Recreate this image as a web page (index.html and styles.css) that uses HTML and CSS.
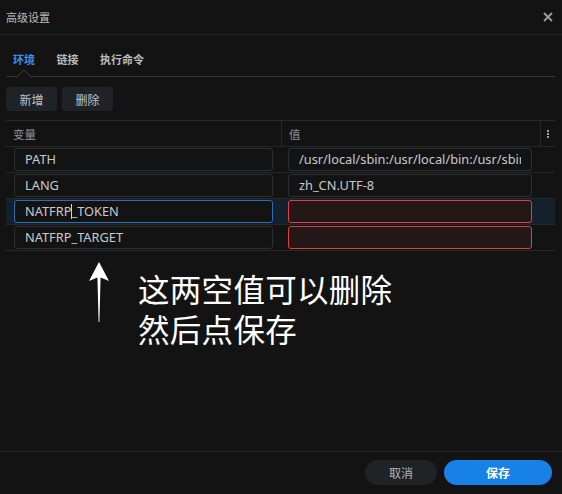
FILE: index.html
```html
<!DOCTYPE html>
<html lang="zh">
<head>
<meta charset="utf-8">
<link rel="stylesheet" href="styles.css">
</head>
<body>
<div class="dialog">
  <div class="titlebar">
    <span class="title">高级设置</span>
    <svg class="close" width="10" height="10" viewBox="0 0 10 10"><path d="M1 1L9 9M9 1L1 9" stroke="#9a9ea2" stroke-width="1.8"/></svg>
  </div>
  <div class="content">
    <div class="tabs">
      <span class="tab active">环境</span>
      <span class="tab">链接</span>
      <span class="tab">执行命令</span>
      <svg class="caret" width="14" height="7" viewBox="0 0 14 7"><path d="M0 7L7 0L14 7" fill="#131313" stroke="#3a3d40" stroke-width="1"/></svg>
    </div>
    <div class="toolbar">
      <button class="btn">新增</button>
      <button class="btn">删除</button>
    </div>
    <div class="table">
      <div class="row head">
        <div class="cell c1">变量</div>
        <div class="cell c2">值</div>
        <div class="cell c3"><span class="kebab"><i></i><i></i><i></i></span></div>
      </div>
      <div class="row">
        <div class="cell c1"><div class="input"><span class="val">PATH</span></div></div>
        <div class="cell c2"><div class="input"><span class="val">/usr/local/sbin:/usr/local/bin:/usr/sbin</span></div></div>
        <div class="cell c3"></div>
      </div>
      <div class="row">
        <div class="cell c1"><div class="input"><span class="val">LANG</span></div></div>
        <div class="cell c2"><div class="input"><span class="val">zh_CN.UTF-8</span></div></div>
        <div class="cell c3"></div>
      </div>
      <div class="row hl">
        <div class="cell c1"><div class="input focus"><span class="val">NATFRP<span class="cursor"></span>_TOKEN</span></div></div>
        <div class="cell c2"><div class="input error"></div></div>
        <div class="cell c3"></div>
      </div>
      <div class="row">
        <div class="cell c1"><div class="input"><span class="val">NATFRP_TARGET</span></div></div>
        <div class="cell c2"><div class="input error"></div></div>
        <div class="cell c3"></div>
      </div>
    </div>
    <div class="note">
      <svg class="arrow" width="22" height="60" viewBox="0 0 22 60"><path d="M11 0L21 19L12.6 15.5L11.4 60L10.6 60L9.4 15.5L1 19Z" fill="#ffffff"/></svg>
      <div class="note-text">
        <div class="line">这两空值可以删除</div>
        <div class="line">然后点保存</div>
      </div>
    </div>
  </div>
  <div class="footer">
    <button class="fbtn cancel">取消</button>
    <button class="fbtn save">保存</button>
  </div>
</div>
</body>
</html>
```
FILE: styles.css
```css
* { box-sizing: border-box; }
html, body {
  margin: 0;
  padding: 0;
  background: #131313;
}
body {
  width: 562px;
  height: 494px;
  overflow: hidden;
  font-family: "Noto Sans", "Noto Sans CJK SC", sans-serif;
  color: #c4c8cc;
}
.dialog {
  display: flex;
  flex-direction: column;
  height: 494px;
}
.titlebar {
  height: 35px;
  padding: 0 9px 1px 6px;
  display: flex;
  align-items: center;
  justify-content: space-between;
  border-bottom: 1px solid #262626;
}
.title {
  font-family: "Noto Sans CJK SC", sans-serif;
  font-size: 11px;
  color: #b9bdc1;
}
.content {
  flex: 1;
  padding: 0 7px 0 6px;
}
.tabs {
  position: relative;
  height: 42px;
  display: flex;
  align-items: center;
  gap: 21.5px;
  padding: 6px 0 0 7px;
  border-bottom: 1px solid #333639;
}
.tab {
  font-family: "Noto Sans CJK SC", sans-serif;
  font-size: 11px;
  font-weight: 700;
  color: #b7bbbf;
}
.tab.active { color: #3b8ff0; }
.caret {
  position: absolute;
  left: 11px;
  bottom: -1px;
}
.toolbar {
  display: flex;
  gap: 5px;
  margin-top: 10px;
}
.btn {
  height: 24px;
  width: 51px;
  border: none;
  border-radius: 3px;
  background: #1f2226;
  color: #c0c4c8;
  font-family: "Noto Sans CJK SC", sans-serif;
  font-size: 12px;
  padding: 0;
}
.table {
  margin-top: 9px;
  border-top: 1px solid #2a2a2a;
}
.row {
  display: flex;
  height: 26px;
  border-bottom: 1px solid #262829;
}
.row.hl { background: #14202b; }
.cell {
  display: flex;
  align-items: center;
}
.c1 { width: 275px; padding: 0 8px; }
.c2 { width: 259px; padding: 0 8px 0 7px; }
.c3 { width: 15px; justify-content: center; }
.head .cell {
  font-family: "Noto Sans CJK SC", sans-serif;
  font-size: 11.5px;
  color: #8e9296;
  padding-left: 7px;
}
.head .c2 { border-left: 1px solid #262829; }
.head .c3 { border-left: 1px solid #262829; padding-left: 0; }
.kebab {
  display: flex;
  flex-direction: column;
  gap: 1px;
}
.kebab i {
  display: block;
  width: 2px;
  height: 2px;
  background: #9ea2a6;
}
.input {
  width: 100%;
  height: 23px;
  border: 1px solid #2c2f32;
  border-radius: 3px;
  background: #131313;
  padding: 0 10px;
  font-size: 12.8px;
  line-height: 21px;
  color: #c6cace;
}
.val {
  display: block;
  white-space: nowrap;
  overflow: hidden;
}
.input.focus { border-color: #2f6cb4; }
.input.error {
  border-color: #e0403f;
  background: #231717;
}
.cursor {
  display: inline-block;
  width: 1px;
  height: 15px;
  background: #d0d4d8;
  vertical-align: -3px;
  margin-right: -1px;
}
.note {
  display: flex;
  align-items: flex-start;
  padding: 11px 0 0 82px;
}
.arrow { flex: none; }
.note-text {
  margin-left: 28px;
  margin-top: 6px;
  font-family: "Noto Sans CJK SC", sans-serif;
  font-size: 31.5px;
  color: #ffffff;
  letter-spacing: 0.3px;
}
.line {
  height: 40px;
  line-height: 40px;
  white-space: nowrap;
}
.footer {
  height: 43px;
  border-top: 1px solid #262626;
  display: flex;
  justify-content: flex-end;
  align-items: flex-start;
  gap: 7px;
  padding: 8px 10px 0 0;
}
.fbtn {
  height: 25px;
  border: none;
  border-radius: 13px;
  font-family: "Noto Sans CJK SC", sans-serif;
  font-size: 12px;
  padding: 0;
}
.cancel { width: 72px; background: #202326; color: #b0b4b8; }
.save { width: 108px; background: #1781e8; color: #ffffff; font-weight: 700; }
```
